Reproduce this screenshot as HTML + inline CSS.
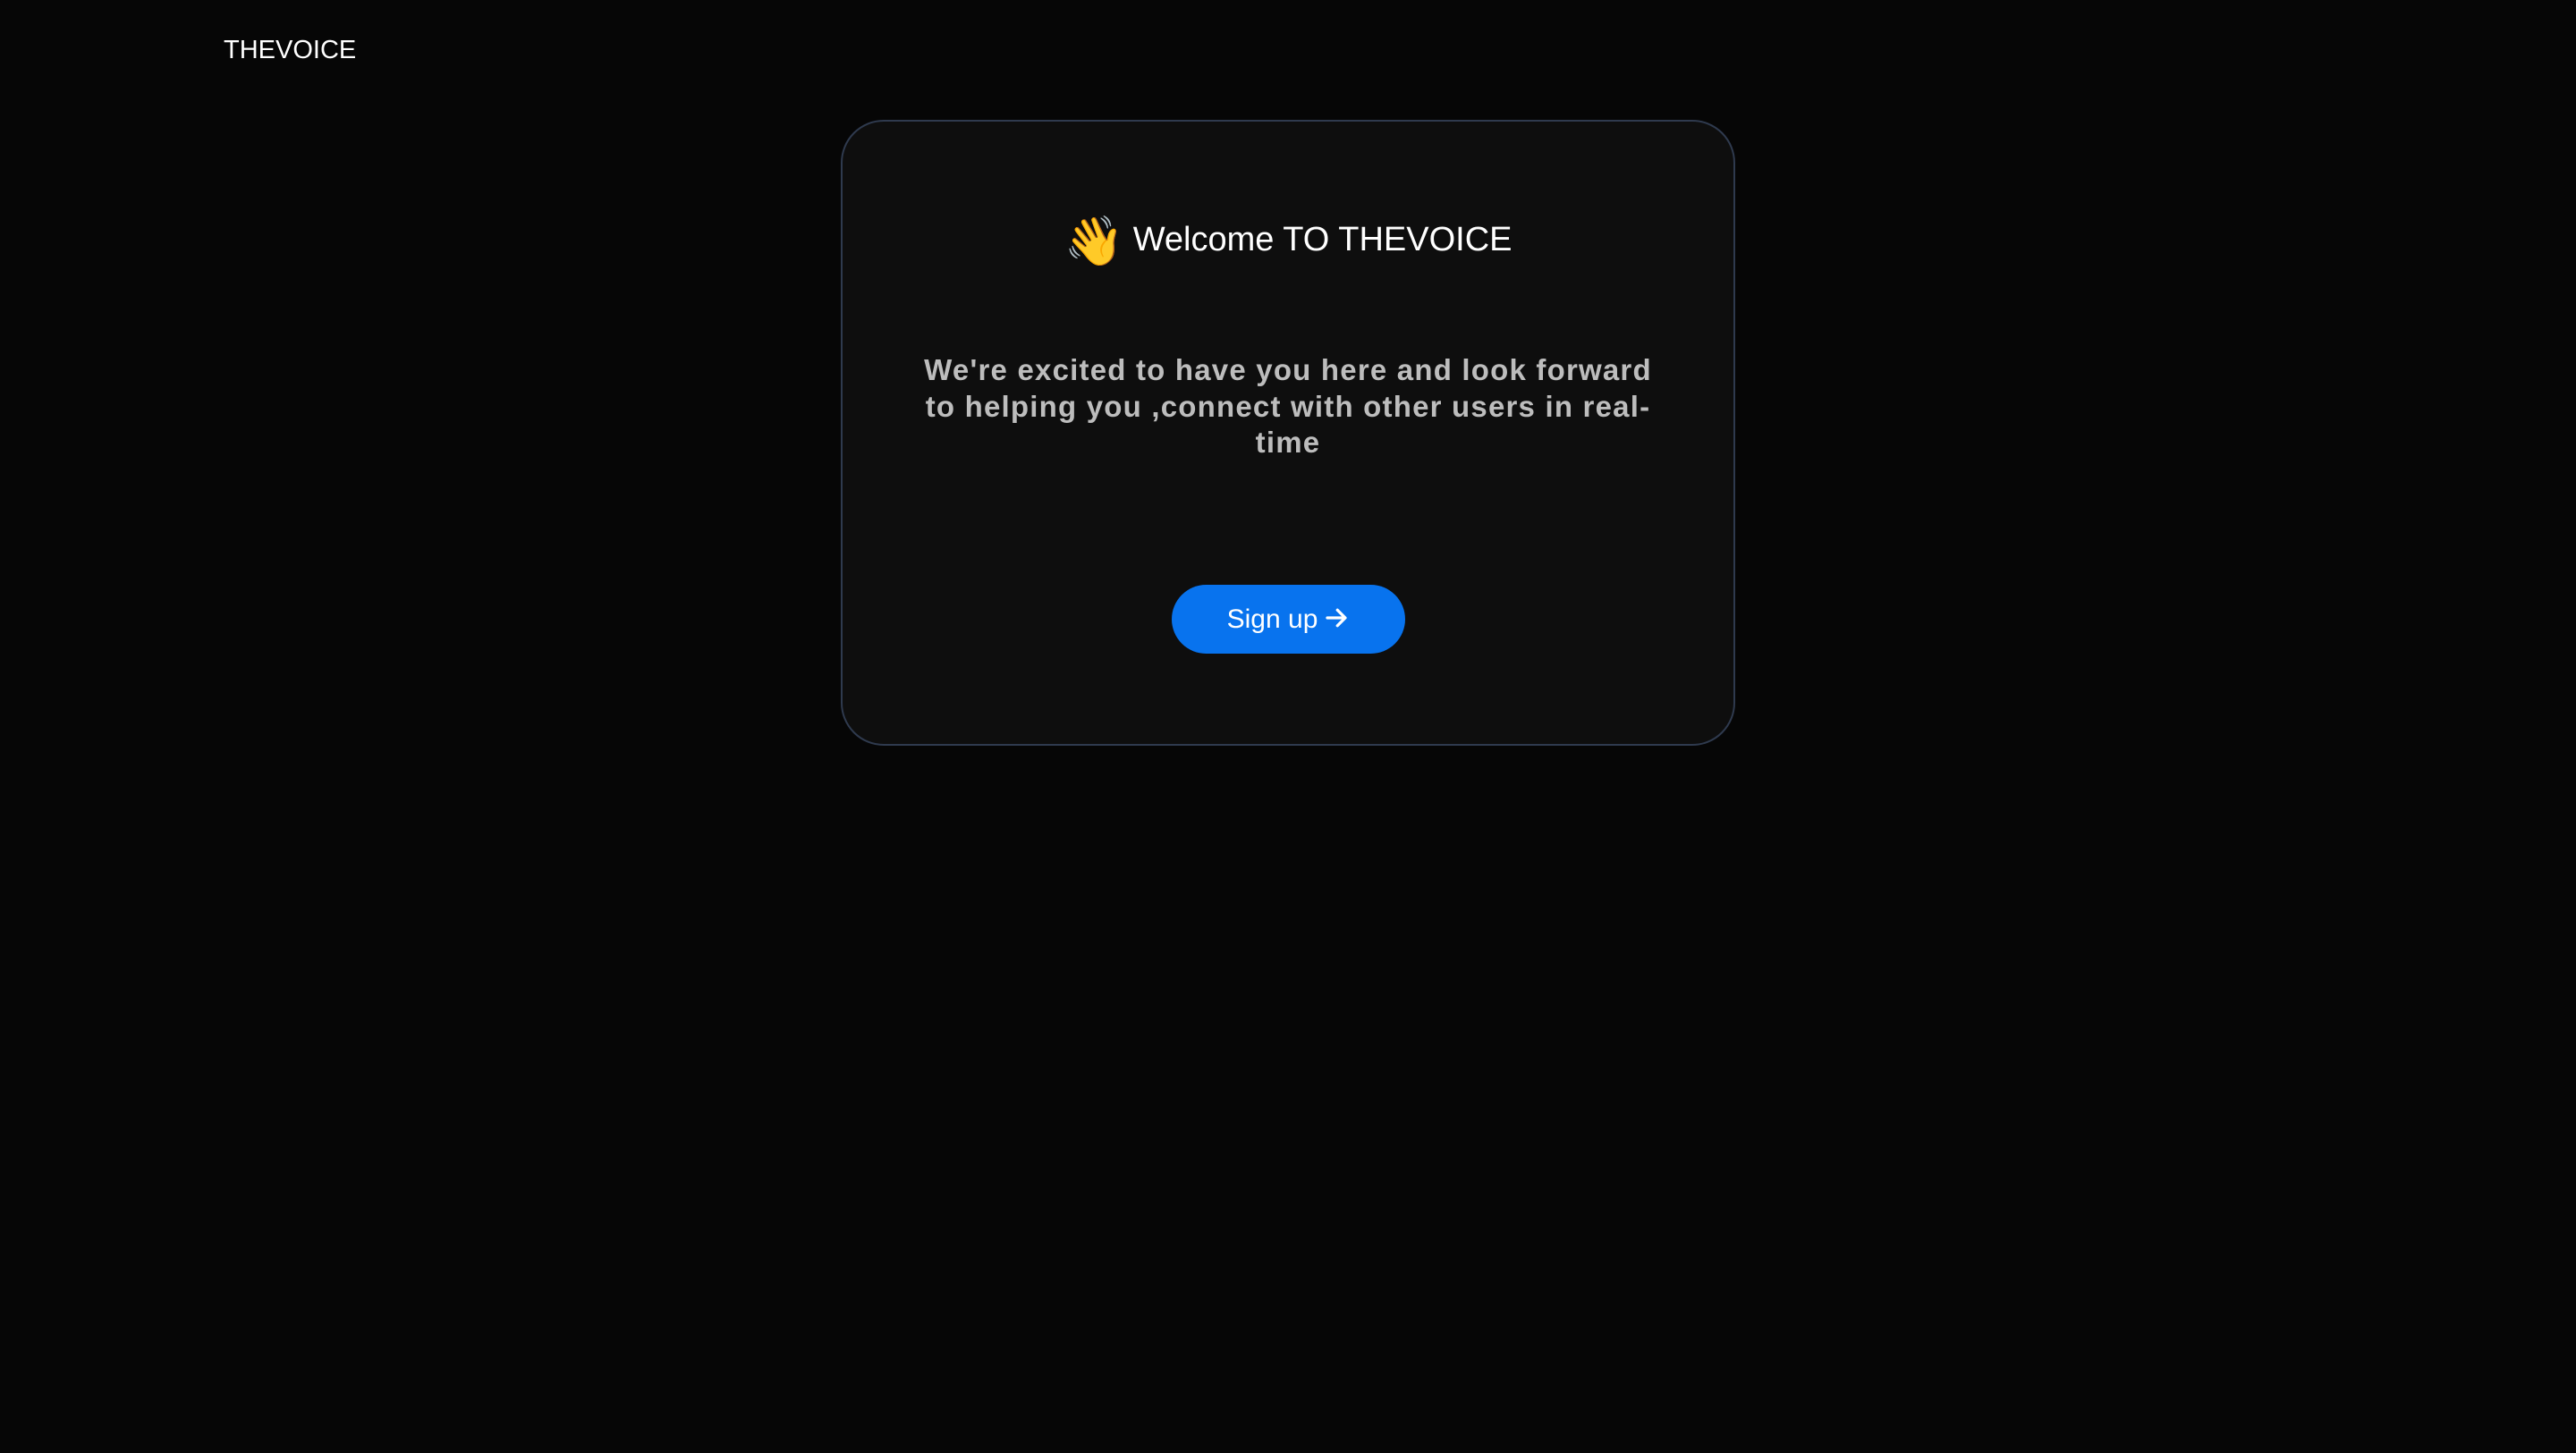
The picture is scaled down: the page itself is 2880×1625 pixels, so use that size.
<!DOCTYPE html>
<html><head><meta charset="utf-8"><style>
html,body{margin:0;padding:0;width:2880px;height:1625px;background:#060606;overflow:hidden;font-family:"Liberation Sans",sans-serif}
.logo{position:absolute;left:250px;top:40px;color:#fff;font-size:29px}
.card{position:absolute;left:940px;top:134px;width:996px;height:696px;border:2px solid #2f3a4e;border-radius:48px;background:#0e0e0e}
.h{position:absolute;left:0;width:100%;top:102px;text-align:center;color:#fff;font-size:38px;line-height:60px;white-space:nowrap}
.h .e{font-size:54px;vertical-align:-8px;margin-right:10px}
.p{position:absolute;left:0;width:996px;top:258px;text-align:center;color:#bdbdbd;font-size:33px;line-height:40.5px;font-weight:bold;white-space:nowrap;letter-spacing:1.2px}
.btn{position:absolute;left:368px;top:518px;width:261px;height:77px;border-radius:39px;background:#0873ee;color:#fff;font-size:30px;line-height:77px;text-align:center}
.btn svg{vertical-align:-4px;margin-left:6px}
</style></head><body>
<div class="logo">THEVOICE</div>
<div class="card">
<div class="h"><span class="e">👋</span>Welcome TO THEVOICE</div>
<div class="p">We're excited to have you here and look forward<br>to helping you ,connect with other users in real-<br>time</div>
<div class="btn">Sign up<svg width="30" height="30" viewBox="0 0 24 24" fill="none" stroke="#fff" stroke-width="2.6" stroke-linecap="round" stroke-linejoin="round"><path d="M4 12h15M13 5l7 7-7 7"/></svg></div>
</div>
</body></html>
